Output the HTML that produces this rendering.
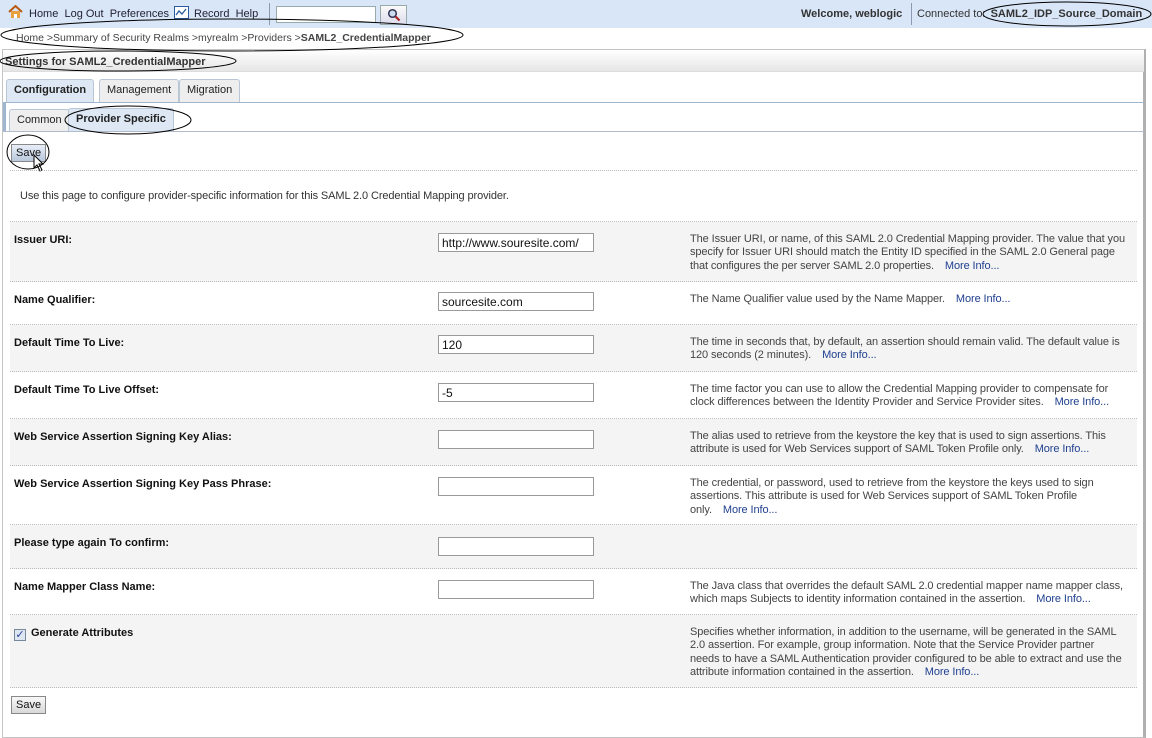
<!DOCTYPE html>
<html><head><meta charset="utf-8"><style>
*{margin:0;padding:0;box-sizing:border-box}
body{width:1152px;height:738px;position:relative;overflow:hidden;background:#fff;font-family:"Liberation Sans","DejaVu Sans",sans-serif;font-size:11px;color:#222}
.a{position:absolute;white-space:nowrap}
.top{left:0;top:0;width:1152px;height:28px;background:#d9e6f7}
.lnk{color:#223}
.inp{position:absolute;height:19px;width:156px;border:1px solid #9a9a9a;background:#fff;font-size:12px;padding:2px 3px;color:#111;overflow:hidden;white-space:nowrap}
.row{position:absolute;left:10px;width:1127px;border-bottom:1px dotted #bbb}
.g{background:#f4f4f4}
.lab{position:absolute;left:4px;top:12px;font-weight:bold;color:#111}
.desc{position:absolute;left:680px;top:11px;width:460px;line-height:13.3px;color:#444;white-space:nowrap;letter-spacing:-0.1px}
.mi{color:#1f3f8f;margin-left:8px}
.btn{position:absolute;border:1px solid #888;background:linear-gradient(#f8f8f8,#d8d8d8);font-size:11px;padding:2px 4px;color:#111}
.tab{position:absolute;border:1px solid #b9c6d6;border-bottom:none;border-radius:3px 3px 0 0;background:#eee;padding:4px 7px;font-size:11px;color:#222}
</style></head><body>
<div class="a top"></div>
<svg class="a" style="left:8px;top:5px" width="15" height="14" viewBox="0 0 15 14"><path d="M1 7L7.5 1 14 7" stroke="#b85a10" stroke-width="2" fill="none"/><rect x="3" y="6" width="9" height="7" fill="#e8a040"/><rect x="6" y="9" width="3" height="4" fill="#fff"/></svg>
<div class="a lnk" style="left:29px;top:8px">Home&nbsp; Log Out&nbsp; Preferences</div>
<svg class="a" style="left:174px;top:6px" width="15" height="13"><rect x=".5" y=".5" width="14" height="12" fill="#fff" stroke="#2a5aa0"/><path d="M2 9l3-4 3 3 4-5" stroke="#2a5aa0" fill="none" stroke-width="1.3"/></svg>
<div class="a lnk" style="left:194px;top:8px">Record&nbsp; Help</div>
<div class="a" style="left:269px;top:3px;width:1px;height:22px;background:#8a9ab0"></div>
<div class="a" style="left:276px;top:6px;width:100px;height:17px;background:#fff;border:1px solid #9aa"></div>
<div class="a" style="left:380px;top:5px;width:27px;height:20px;border:1px solid #9aa;background:linear-gradient(#fafafa,#dde);"></div>
<svg class="a" style="left:387px;top:8px" width="14" height="14"><circle cx="5.5" cy="5.5" r="3.8" fill="#cde" stroke="#335" stroke-width="1.5"/><path d="M8.5 8.5l4 4" stroke="#a22" stroke-width="2.2"/></svg>
<div class="a" style="left:801px;top:8px;font-weight:bold;color:#333">Welcome, weblogic</div>
<div class="a" style="left:911px;top:3px;width:1px;height:22px;background:#8a9ab0"></div>
<div class="a" style="left:917px;top:8px;color:#333">Connected to: <b style="margin-left:2px">SAML2_IDP_Source_Domain</b></div>
<div class="a" style="left:16px;top:32px;color:#444;font-size:10.5px">Home &gt;Summary of Security Realms &gt;myrealm &gt;Providers &gt;<b>SAML2_CredentialMapper</b></div>
<div class="a" style="left:2px;top:49px;width:1144px;height:689px;border:1px solid #c4c4c4;border-right:3px solid #b0b0b0"></div>
<div class="a" style="left:3px;top:50px;width:1141px;height:22px;background:linear-gradient(#fff,#e6e6e6);border-bottom:1px solid #ddd"></div>
<div class="a" style="left:5px;top:56px;font-weight:bold;color:#333">Settings for SAML2_CredentialMapper</div>
<div class="tab" style="left:6px;top:79px;height:23px;background:#dde8f4;font-weight:bold">Configuration</div>
<div class="tab" style="left:99px;top:79px;height:23px">Management</div>
<div class="tab" style="left:179px;top:79px;height:23px">Migration</div>
<div class="a" style="left:3px;top:102px;width:1141px;height:1px;background:#9fb6d0"></div>
<div class="a" style="left:3px;top:102px;width:3px;height:30px;background:#9fb6d0"></div>
<div class="tab" style="left:9px;top:109px;height:22px">Common</div>
<div class="tab" style="left:68px;top:108px;height:23px;background:#dde8f4;font-weight:bold">Provider Specific</div>
<div class="a" style="left:3px;top:131px;width:1141px;height:1px;background:#aebccc"></div>
<div class="btn" style="left:11px;top:144px;background:linear-gradient(#e8eef8,#b8c8dc)">Save</div>
<svg class="a" style="left:33px;top:154px" width="12" height="18"><path d="M1 1v13l3-3 3 6 2-1-3-6h4z" fill="#fff" stroke="#000"/></svg>
<div class="a" style="left:10px;top:170px;width:1127px;border-top:1px dotted #bbb"></div>
<div class="a" style="left:20px;top:190px;color:#333;letter-spacing:-0.1px">Use this page to configure provider-specific information for this SAML 2.0 Credential Mapping provider.</div>
<div class="a" style="left:10px;top:221px;width:1127px;border-top:1px dotted #bbb"></div>

<div class="row g" style="top:222px;height:60px"><div class="lab">Issuer URI:</div><div class="inp" style="left:428px;top:11px">http://www.souresite.com/</div><div class="desc">The Issuer URI, or name, of this SAML 2.0 Credential Mapping provider. The value that you<br>specify for Issuer URI should match the Entity ID specified in the SAML 2.0 General page<br>that configures the per server SAML 2.0 properties. <span class="mi">More Info...</span></div></div>
<div class="row" style="top:282px;height:43px"><div class="lab">Name Qualifier:</div><div class="inp" style="left:428px;top:10px">sourcesite.com</div><div class="desc">The Name Qualifier value used by the Name Mapper. <span class="mi">More Info...</span></div></div>
<div class="row g" style="top:325px;height:47px"><div class="lab">Default Time To Live:</div><div class="inp" style="left:428px;top:10px">120</div><div class="desc">The time in seconds that, by default, an assertion should remain valid. The default value is<br>120 seconds (2 minutes). <span class="mi">More Info...</span></div></div>
<div class="row" style="top:372px;height:47px"><div class="lab">Default Time To Live Offset:</div><div class="inp" style="left:428px;top:11px">-5</div><div class="desc">The time factor you can use to allow the Credential Mapping provider to compensate for<br>clock differences between the Identity Provider and Service Provider sites. <span class="mi">More Info...</span></div></div>
<div class="row g" style="top:419px;height:47px"><div class="lab">Web Service Assertion Signing Key Alias:</div><div class="inp" style="left:428px;top:11px"></div><div class="desc">The alias used to retrieve from the keystore the key that is used to sign assertions. This<br>attribute is used for Web Services support of SAML Token Profile only. <span class="mi">More Info...</span></div></div>
<div class="row" style="top:466px;height:59px"><div class="lab">Web Service Assertion Signing Key Pass Phrase:</div><div class="inp" style="left:428px;top:11px"></div><div class="desc">The credential, or password, used to retrieve from the keystore the keys used to sign<br>assertions. This attribute is used for Web Services support of SAML Token Profile<br>only. <span class="mi">More Info...</span></div></div>
<div class="row g" style="top:525px;height:44px"><div class="lab">Please type again To confirm:</div><div class="inp" style="left:428px;top:12px"></div></div>
<div class="row" style="top:569px;height:46px"><div class="lab">Name Mapper Class Name:</div><div class="inp" style="left:428px;top:11px"></div><div class="desc">The Java class that overrides the default SAML 2.0 credential mapper name mapper class,<br>which maps Subjects to identity information contained in the assertion. <span class="mi">More Info...</span></div></div>
<div class="row g" style="top:615px;height:73px"><div class="lab" style="left:4px"><span style="display:inline-block;width:12px;height:12px;border:1px solid #789;background:#dde6f0;color:#2a3f9f;font-size:11px;line-height:11px;text-align:center;vertical-align:-2px;margin-right:5px">✓</span>Generate Attributes</div><div class="desc">Specifies whether information, in addition to the username, will be generated in the SAML<br>2.0 assertion. For example, group information. Note that the Service Provider partner<br>needs to have a SAML Authentication provider configured to be able to extract and use the<br>attribute information contained in the assertion. <span class="mi">More Info...</span></div></div>
<div class="btn" style="left:11px;top:696px">Save</div>

<svg class="a" style="left:0;top:0" width="1152" height="738" fill="none" stroke="#000" stroke-width="1">
<ellipse cx="232" cy="35" rx="231" ry="16"/>
<ellipse cx="118" cy="61" rx="118" ry="10"/>
<ellipse cx="1067" cy="14" rx="84" ry="12"/>
<ellipse cx="128" cy="120" rx="63" ry="14"/>
<ellipse cx="28" cy="152" rx="21" ry="17"/>
</svg>
</body></html>
